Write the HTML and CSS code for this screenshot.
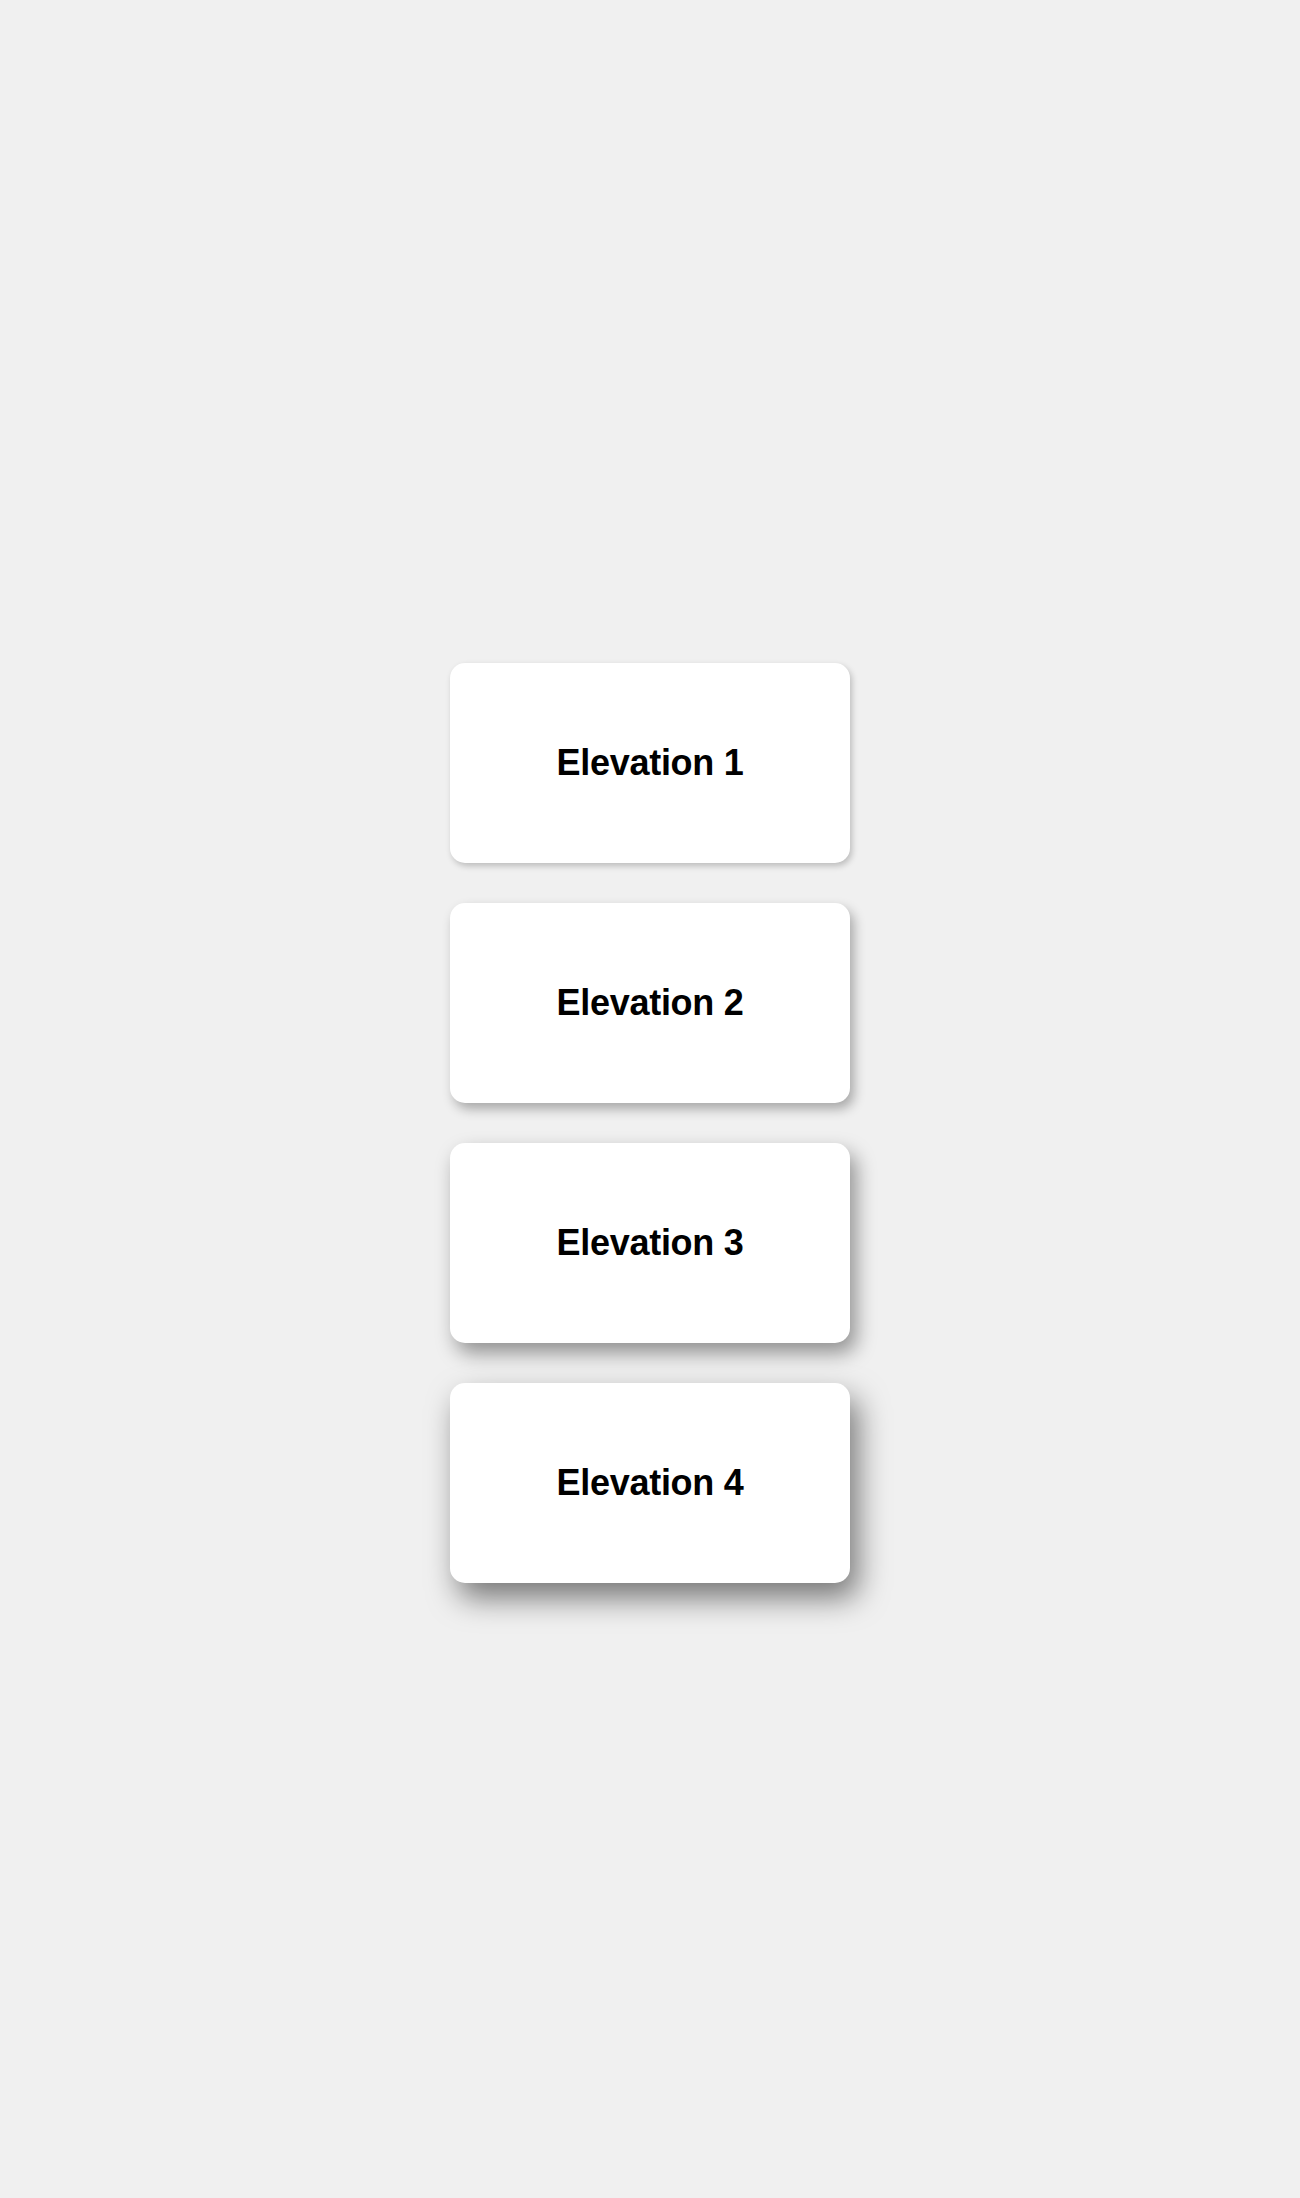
FILE: index.html
```html
<!DOCTYPE html>
<html lang="en">
<head>
  <meta charset="UTF-8">
  <meta name="viewport" content="width=device-width, initial-scale=1.0">
  <title>Elevation</title>
  <link rel="stylesheet" href="styles.css">
</head>
<body>
  <div class="container">
    <div class="card elevation-1"><h2>Elevation 1</h2></div>
    <div class="card elevation-2"><h2>Elevation 2</h2></div>
    <div class="card elevation-3"><h2>Elevation 3</h2></div>
    <div class="card elevation-4"><h2>Elevation 4</h2></div>
  </div>
</body>
</html>
```

FILE: styles.css
```css
body {
  font-family: 'Liberation Sans', Arial, Helvetica, sans-serif;
  margin: 0;
  background: #f0f0f0;
  color: #000;
  min-height: 100vh;
  display: flex;
  align-items: center;
  justify-content: center;
}

.container {
  display: flex;
  flex-direction: column;
  gap: 40px;
  padding-top: 48px;
}

.card {
  width: 400px;
  height: 200px;
  background: #fff;
  border-radius: 15px;
  display: flex;
  align-items: center;
  justify-content: center;
}

.card h2 {
  margin: 0;
  font-size: 36px;
  font-weight: bold;
  letter-spacing: -0.3px;
}

.elevation-1 {
  box-shadow: 2px 3px 6px rgba(0, 0, 0, 0.22);
}

.elevation-2 {
  box-shadow: 4px 6px 12px rgba(0, 0, 0, 0.3);
}

.elevation-3 {
  box-shadow: 6px 10px 20px rgba(0, 0, 0, 0.4);
}

.elevation-4 {
  box-shadow: 8px 15px 30px rgba(0, 0, 0, 0.5);
}
```
